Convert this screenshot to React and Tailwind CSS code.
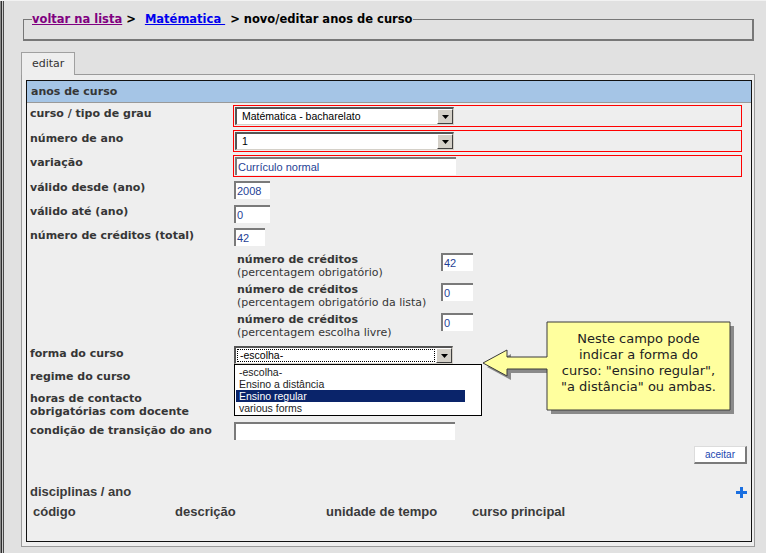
import React from 'react';

const LABEL = "font-['DejaVu_Sans',Verdana,sans-serif] font-bold text-[11px] leading-[13px] text-[#363636]";
const FIELD = "font-['Liberation_Sans',Arial,sans-serif] text-[10.5px]";

const Arrow = () => (
  <svg width="7" height="4" viewBox="0 0 7 4">
    <path d="M0 0H7L3.5 4Z" fill="#000" />
  </svg>
);

function Select({ value, focus }) {
  return (
    <div className="flex h-[18px] w-[219px] bg-white border-t-2 border-l-2 border-t-[#555] border-l-[#555] border-b border-r border-b-[#d4d0c8] border-r-[#d4d0c8]">
      <div className="flex-1 flex items-center px-[1px] py-[1px]">
        {focus ? (
          <div className={`flex-1 h-full flex items-center pl-[2px] border border-dotted border-black text-black ${FIELD}`}>{value}</div>
        ) : (
          <span className={`pl-[4px] text-black ${FIELD}`}>{value}</span>
        )}
      </div>
      <div className="w-[16px] h-full flex items-center justify-center bg-[#d4d0c8] border-t border-l border-t-white border-l-white border-b border-r border-b-[#404040] border-r-[#404040]">
        <Arrow />
      </div>
    </div>
  );
}

function Input({ value, w }) {
  return (
    <div className={`h-[18px] ${w} bg-white border-t-2 border-l-2 border-[#7a7a7a] flex items-center pl-[1px] text-[#1f3f95] ${FIELD} text-[11px]`}>
      {value}
    </div>
  );
}

const Red = ({ children }) => (
  <div className="w-[509px] h-[22px] border border-[#ff0000] p-[1px]">{children}</div>
);

function Row({ cls, label, pad, children }) {
  return (
    <div className={`flex ${cls}`}>
      <div className={`w-[206px] shrink-0 pl-[3px] ${pad} ${LABEL}`}>{label}</div>
      <div className="flex-1 relative">{children}</div>
    </div>
  );
}

function Credit({ cls, sub, value }) {
  return (
    <div className={`flex ${cls}`}>
      <div className="w-[206px] shrink-0" />
      <div className="w-[208px] shrink-0 pl-[4px]">
        <div className={LABEL}>número de créditos</div>
        <div className="font-['DejaVu_Sans',Verdana,sans-serif] text-[11px] leading-[13px] text-[#363636]">{sub}</div>
      </div>
      <Input value={value} w="w-[32px]" />
    </div>
  );
}

function Tooltip() {
  const shape = 'M67 4H250V92H67V51H27V58L3 45L27 32V39H67Z';
  return (
    <div className="absolute left-[453px] top-[237px] w-[258px] h-[100px] z-30">
      <svg width="258" height="100" viewBox="0 0 258 100" className="absolute left-0 top-0">
        <path d={shape} transform="translate(4 4)" fill="#8a8a8a" />
        <path d={shape} fill="#ffff9e" stroke="#3a3a3a" strokeWidth="1" />
      </svg>
      <div className="absolute left-[67px] top-[13px] w-[183px] text-center font-['DejaVu_Sans',Verdana,sans-serif] text-[13px] leading-[16px] text-[#222]">
        Neste campo pode<br />indicar a forma do<br />curso: "ensino regular",<br />"a distância" ou ambas.
      </div>
    </div>
  );
}

function Dropdown() {
  const opt = `h-[12px] leading-[12px] pl-[4px] text-[#222] ${FIELD}`;
  return (
    <div className="absolute left-0 top-[18px] w-[248px] h-[52px] bg-white border border-black z-20 pt-[1px]">
      <div className={opt}>-escolha-</div>
      <div className={opt}>Ensino a distância</div>
      <div className={`h-[12px] leading-[12px] ml-[1px] w-[229px] pl-[3px] bg-[#0a246a] text-white ${FIELD}`}>Ensino regular</div>
      <div className={opt}>various forms</div>
    </div>
  );
}

export default function App() {
  return (
    <div className="w-[766px] h-[553px] bg-[#e1e1e1] flex overflow-hidden border-t border-t-[#f2f2f2]">
      <div className="w-[1px] bg-[#8a8a8a]" />
      <div className="w-[1px] bg-[#2e2e2e]" />
      <div className="w-[1px] bg-[#c9c9c9]" />
      <div className="w-[1px] bg-[#4a4a4a]" />
      <div className="flex-1 flex flex-col">
        <fieldset className="ml-[19px] w-[731px] mt-[11px] border-t border-l border-b-2 border-r-2 border-[#777] pl-[8px]">
          <legend className="font-['DejaVu_Sans',Verdana,sans-serif] font-bold text-[11.5px] leading-[14px] text-black">
            <a className="text-[#800080] underline">voltar na lista</a>
            <span> &gt;  </span>
            <a className="text-[#0000ee] underline ml-[5px]">Matématica </a>
            <span className="ml-[5px]">&gt; novo/editar anos de curso</span>
          </legend>
          <div className="h-[13px]" />
        </fieldset>

        <div className="ml-[17px] mt-[11px] w-[54px] h-[23px] -mb-px relative z-10 bg-[#eeeeee] border border-b-0 border-[#a0a0a0] pl-[10px] pt-[3px] font-['DejaVu_Sans',Verdana,sans-serif] text-[11px] text-[#333]">
          editar
        </div>
        <div className="ml-[17px] w-[734px] bg-[#eeeeee] border border-[#9a9a9a] pl-[4px] pt-[5px] pr-[2px] pb-[4px]">
          <div className="relative h-[462px] border border-[#111] bg-[#eeeeee] flex flex-col">
            <div className={`h-[22px] shrink-0 bg-[#a5c5e6] border-b border-[#999] pl-[4px] pt-[4px] ${LABEL}`}>anos de curso</div>

            <Row cls="mt-[2px]" pad="pt-[2px]" label="curso / tipo de grau">
              <Red><Select value="Matématica - bacharelato" /></Red>
            </Row>
            <Row cls="mt-[3px]" pad="pt-[2px]" label="número de ano">
              <Red><Select value="1" /></Red>
            </Row>
            <Row cls="mt-[3px]" pad="pt-[1px]" label="variação">
              <Red><Input value="Currículo normal" w="w-[221px]" /></Red>
            </Row>
            <Row cls="mt-[4px]" pad="pt-0" label="válido desde (ano)">
              <div className="ml-[1px]"><Input value="2008" w="w-[36px]" /></div>
            </Row>
            <Row cls="mt-[6px]" pad="pt-0" label="válido até (ano)">
              <div className="ml-[1px]"><Input value="0" w="w-[36px]" /></div>
            </Row>
            <Row cls="mt-[5px]" pad="pt-[1px]" label="número de créditos (total)">
              <div className="ml-[1px]"><Input value="42" w="w-[31px]" /></div>
            </Row>

            <Credit cls="mt-[7px]" sub="(percentagem obrigatório)" value="42" />
            <Credit cls="mt-[4px]" sub="(percentagem obrigatório da lista)" value="0" />
            <Credit cls="mt-[4px]" sub="(percentagem escolha livre)" value="0" />

            <Row cls="mt-[7px]" pad="pt-[1px]" label="forma do curso">
              <div className="ml-[1px]">
                <Select value="-escolha-" focus />
              </div>
              <div className="absolute left-[1px] top-0 w-[248px]">
                <Dropdown />
              </div>
            </Row>
            <Row cls="mt-[6px] h-[18px]" pad="pt-0" label="regime do curso" />
            <Row cls="mt-[4px] h-[26px]" pad="pt-0" label={<>horas de contacto<br />obrigatórias com docente</>} />
            <Row cls="mt-[4px]" pad="pt-[2px]" label="condição de transição do ano">
              <div className="ml-[1px]"><Input value="" w="w-[221px]" /></div>
            </Row>

            <div className="mt-[6px] flex justify-end pr-[4px]">
              <button className="w-[53px] h-[18px] bg-white border-t border-l border-[#dcdcdc] border-b-2 border-r-2 border-b-[#7a7a7a] border-r-[#7a7a7a] font-['Liberation_Sans',Arial,sans-serif] text-[10px] text-[#1a47b0] leading-none">
                aceitar
              </button>
            </div>

            <div className="mt-[21px] flex items-center justify-between pl-[3px] pr-[4px]">
              <span className="font-['Liberation_Sans',Arial,sans-serif] font-bold text-[13px] leading-[14px] text-[#3a3a3a]">disciplinas / ano</span>
              <svg width="11" height="11" viewBox="0 0 11 11">
                <rect x="4" y="0" width="3" height="11" fill="#1a6fe0" />
                <rect x="0" y="4" width="11" height="3" fill="#1a6fe0" />
              </svg>
            </div>
            <div className="mt-[6px] flex font-['Liberation_Sans',Arial,sans-serif] font-bold text-[13px] leading-[14px] text-[#3a3a3a]">
              <span className="w-[148px] pl-[6px]">código</span>
              <span className="w-[151px]">descrição</span>
              <span className="w-[146px]">unidade de tempo</span>
              <span>curso principal</span>
            </div>

            <Tooltip />
          </div>
        </div>
      </div>
    </div>
  );
}
